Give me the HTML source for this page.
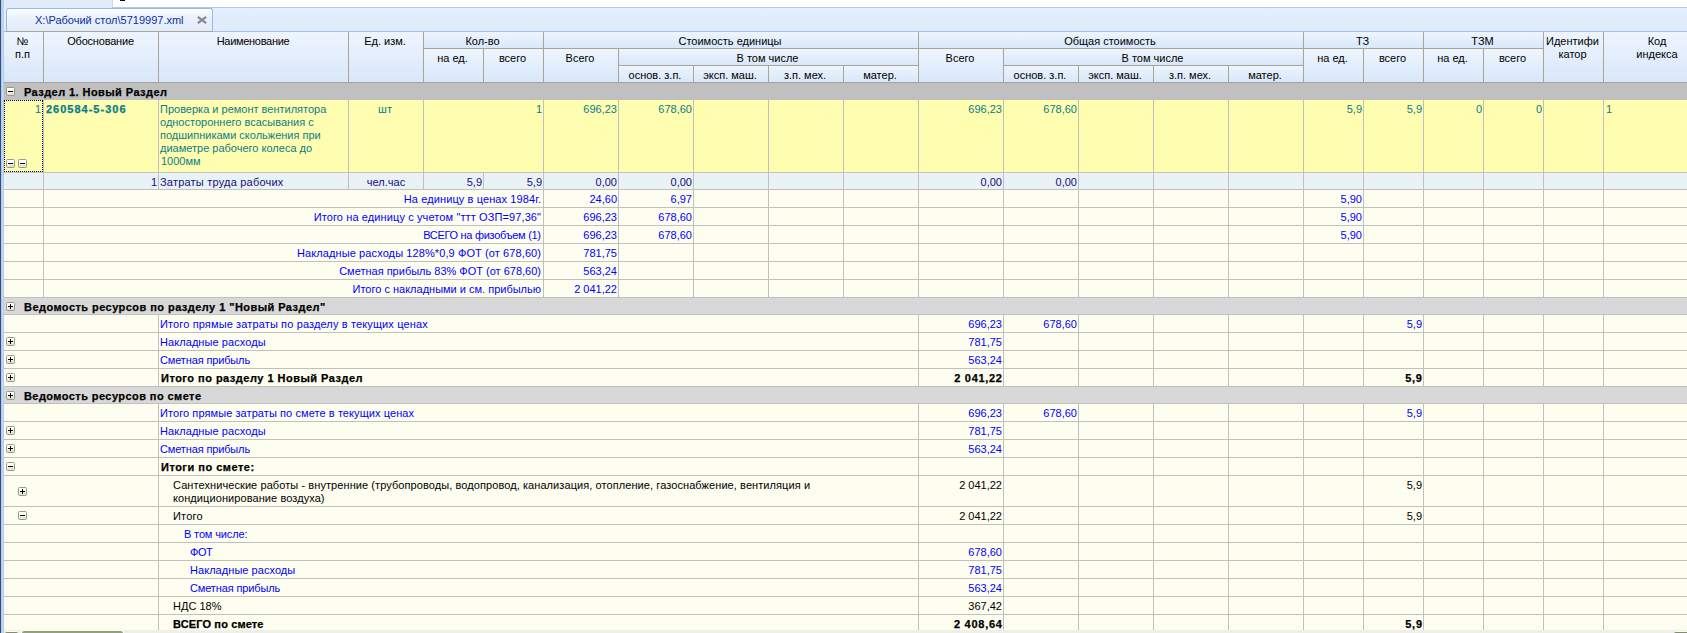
<!DOCTYPE html>
<html><head><meta charset="utf-8"><style>
html,body{margin:0;padding:0}
body{width:1687px;height:633px;position:relative;overflow:hidden;background:#fff;font-family:"Liberation Sans",sans-serif;font-size:11px;line-height:13px}
body>div{position:absolute;box-sizing:content-box}
.t{white-space:nowrap}
.c{text-align:center}
.b{font-weight:bold}
</style></head><body>
<div style="left:0px;top:0px;width:1687px;height:633px;background:#ffffff;"></div>
<div style="left:3px;top:0px;width:109px;height:8px;background:#e1ecfb;"></div>
<div style="left:112px;top:0px;width:1px;height:7px;background:#c9d9ee;"></div>
<div style="left:120px;top:0;width:5px;height:1px;background:#000"></div>
<div style="left:112px;top:7px;width:1575px;height:1px;background:#b5c9e5;"></div>
<div style="left:3px;top:8px;width:1684px;height:23px;background:linear-gradient(#e4eefc,#dfeafb)"></div>
<div style="left:3px;top:31px;width:1684px;height:1px;background:#a2c0e8;"></div>
<div style="left:4px;top:0px;width:1px;height:31px;background:#eaf2fd;"></div>
<div style="left:6px;top:8px;width:205px;height:23px;border:1px solid #99b9e4;border-bottom:none;border-radius:3px 3px 0 0;background:linear-gradient(#fbfdff,#e9f1fc 40%,#e1ebfa)"></div>
<div style="left:6px;top:31px;width:207px;height:1px;background:#a9a493;"></div>
<div class="t" style="left:35px;top:14px;color:#0c2fa0">X:\Рабочий стол\5719997.xml</div>
<svg style="position:absolute;left:196px;top:15px" width="12" height="10" viewBox="0 0 12 10"><path d="M1.9 1.9L10.1 8.1M10.1 1.9L1.9 8.1" stroke="#8a8a8a" stroke-width="2.3" stroke-linecap="butt"/></svg>
<div style="left:0px;top:0px;width:1px;height:633px;background:#30507f;"></div>
<div style="left:1px;top:0px;width:1px;height:633px;background:#b6cae2;"></div>
<div style="left:2px;top:0px;width:1px;height:633px;background:#c4d9f4;"></div>
<div style="left:3px;top:0px;width:1px;height:633px;background:#b2cdf1;"></div>
<div style="left:4px;top:32px;width:1683px;height:51px;background:#a9a493;"></div>
<div style="left:4px;top:32px;width:39px;height:50px;background:linear-gradient(#eef5fe,#d8e7fa)"></div>
<div class="t c" style="left:3px;top:35px;width:39px">№<br>п.п</div>
<div style="left:44px;top:32px;width:114px;height:50px;background:linear-gradient(#eef5fe,#d8e7fa)"></div>
<div class="t c" style="left:43px;top:35px;width:114px"><span style="letter-spacing:-0.2px;margin-left:1px">Обоснование</span></div>
<div style="left:159px;top:32px;width:189px;height:50px;background:linear-gradient(#eef5fe,#d8e7fa)"></div>
<div class="t c" style="left:158px;top:35px;width:189px"><span style="letter-spacing:-0.3px;margin-left:1px">Наименование</span></div>
<div style="left:349px;top:32px;width:74px;height:50px;background:linear-gradient(#eef5fe,#d8e7fa)"></div>
<div class="t c" style="left:348px;top:35px;width:74px">Ед. изм.</div>
<div style="left:424px;top:32px;width:119px;height:16px;background:linear-gradient(#eef5fe,#d8e7fa)"></div>
<div class="t c" style="left:423px;top:35px;width:119px">Кол-во</div>
<div style="left:424px;top:49px;width:59px;height:33px;background:linear-gradient(#eef5fe,#d8e7fa)"></div>
<div class="t c" style="left:423px;top:52px;width:59px">на ед.</div>
<div style="left:484px;top:49px;width:59px;height:33px;background:linear-gradient(#eef5fe,#d8e7fa)"></div>
<div class="t c" style="left:483px;top:52px;width:59px">всего</div>
<div style="left:544px;top:32px;width:374px;height:16px;background:linear-gradient(#eef5fe,#d8e7fa)"></div>
<div class="t c" style="left:543px;top:35px;width:374px">Стоимость единицы</div>
<div style="left:544px;top:49px;width:74px;height:33px;background:linear-gradient(#eef5fe,#d8e7fa)"></div>
<div class="t c" style="left:543px;top:52px;width:74px">Всего</div>
<div style="left:619px;top:49px;width:299px;height:16px;background:linear-gradient(#eef5fe,#d8e7fa)"></div>
<div class="t c" style="left:618px;top:52px;width:299px">В том числе</div>
<div style="left:619px;top:66px;width:74px;height:16px;background:linear-gradient(#eef5fe,#d8e7fa)"></div>
<div class="t c" style="left:618px;top:69px;width:74px">основ. з.п.</div>
<div style="left:694px;top:66px;width:74px;height:16px;background:linear-gradient(#eef5fe,#d8e7fa)"></div>
<div class="t c" style="left:693px;top:69px;width:74px">эксп. маш.</div>
<div style="left:769px;top:66px;width:74px;height:16px;background:linear-gradient(#eef5fe,#d8e7fa)"></div>
<div class="t c" style="left:768px;top:69px;width:74px">з.п. мех.</div>
<div style="left:844px;top:66px;width:74px;height:16px;background:linear-gradient(#eef5fe,#d8e7fa)"></div>
<div class="t c" style="left:843px;top:69px;width:74px">матер.</div>
<div style="left:919px;top:32px;width:384px;height:16px;background:linear-gradient(#eef5fe,#d8e7fa)"></div>
<div class="t c" style="left:918px;top:35px;width:384px">Общая стоимость</div>
<div style="left:919px;top:49px;width:84px;height:33px;background:linear-gradient(#eef5fe,#d8e7fa)"></div>
<div class="t c" style="left:918px;top:52px;width:84px">Всего</div>
<div style="left:1004px;top:49px;width:299px;height:16px;background:linear-gradient(#eef5fe,#d8e7fa)"></div>
<div class="t c" style="left:1003px;top:52px;width:299px">В том числе</div>
<div style="left:1004px;top:66px;width:74px;height:16px;background:linear-gradient(#eef5fe,#d8e7fa)"></div>
<div class="t c" style="left:1003px;top:69px;width:74px">основ. з.п.</div>
<div style="left:1079px;top:66px;width:74px;height:16px;background:linear-gradient(#eef5fe,#d8e7fa)"></div>
<div class="t c" style="left:1078px;top:69px;width:74px">эксп. маш.</div>
<div style="left:1154px;top:66px;width:74px;height:16px;background:linear-gradient(#eef5fe,#d8e7fa)"></div>
<div class="t c" style="left:1153px;top:69px;width:74px">з.п. мех.</div>
<div style="left:1229px;top:66px;width:74px;height:16px;background:linear-gradient(#eef5fe,#d8e7fa)"></div>
<div class="t c" style="left:1228px;top:69px;width:74px">матер.</div>
<div style="left:1304px;top:32px;width:119px;height:16px;background:linear-gradient(#eef5fe,#d8e7fa)"></div>
<div class="t c" style="left:1303px;top:35px;width:119px">ТЗ</div>
<div style="left:1304px;top:49px;width:59px;height:33px;background:linear-gradient(#eef5fe,#d8e7fa)"></div>
<div class="t c" style="left:1303px;top:52px;width:59px">на ед.</div>
<div style="left:1364px;top:49px;width:59px;height:33px;background:linear-gradient(#eef5fe,#d8e7fa)"></div>
<div class="t c" style="left:1363px;top:52px;width:59px">всего</div>
<div style="left:1424px;top:32px;width:119px;height:16px;background:linear-gradient(#eef5fe,#d8e7fa)"></div>
<div class="t c" style="left:1423px;top:35px;width:119px">ТЗМ</div>
<div style="left:1424px;top:49px;width:59px;height:33px;background:linear-gradient(#eef5fe,#d8e7fa)"></div>
<div class="t c" style="left:1423px;top:52px;width:59px">на ед.</div>
<div style="left:1484px;top:49px;width:59px;height:33px;background:linear-gradient(#eef5fe,#d8e7fa)"></div>
<div class="t c" style="left:1483px;top:52px;width:59px">всего</div>
<div style="left:1544px;top:32px;width:59px;height:50px;background:linear-gradient(#eef5fe,#d8e7fa)"></div>
<div class="t c" style="left:1543px;top:35px;width:59px">Идентифи<br>катор</div>
<div style="left:1604px;top:32px;width:108px;height:50px;background:linear-gradient(#eef5fe,#d8e7fa)"></div>
<div class="t c" style="left:1603px;top:35px;width:108px">Код<br>индекса</div>
<div style="left:4px;top:83px;width:1683px;height:17px;background:#c0c0c0;"></div>
<div style="left:6px;top:87px;width:7px;height:7px;border:1px solid #929e84;border-radius:1.5px;background:linear-gradient(#ffffff 30%,#e4ddd0)"><div style="position:absolute;left:1px;top:3px;width:5px;height:1px;background:#000"></div></div>
<div class="t" style="top:86px;color:#000;font-weight:bold;-webkit-text-stroke:0.25px;left:24px;letter-spacing:0.43px">Раздел 1. Новый Раздел</div>
<div style="left:4px;top:100px;width:1683px;height:72px;background:#fffdb0;"></div>
<div style="left:43px;top:100px;width:1px;height:72px;background:#c0c0c0;"></div>
<div style="left:158px;top:100px;width:1px;height:72px;background:#c0c0c0;"></div>
<div style="left:348px;top:100px;width:1px;height:72px;background:#c0c0c0;"></div>
<div style="left:423px;top:100px;width:1px;height:72px;background:#c0c0c0;"></div>
<div style="left:543px;top:100px;width:1px;height:72px;background:#c0c0c0;"></div>
<div style="left:618px;top:100px;width:1px;height:72px;background:#c0c0c0;"></div>
<div style="left:693px;top:100px;width:1px;height:72px;background:#c0c0c0;"></div>
<div style="left:768px;top:100px;width:1px;height:72px;background:#c0c0c0;"></div>
<div style="left:843px;top:100px;width:1px;height:72px;background:#c0c0c0;"></div>
<div style="left:918px;top:100px;width:1px;height:72px;background:#c0c0c0;"></div>
<div style="left:1003px;top:100px;width:1px;height:72px;background:#c0c0c0;"></div>
<div style="left:1078px;top:100px;width:1px;height:72px;background:#c0c0c0;"></div>
<div style="left:1153px;top:100px;width:1px;height:72px;background:#c0c0c0;"></div>
<div style="left:1228px;top:100px;width:1px;height:72px;background:#c0c0c0;"></div>
<div style="left:1303px;top:100px;width:1px;height:72px;background:#c0c0c0;"></div>
<div style="left:1363px;top:100px;width:1px;height:72px;background:#c0c0c0;"></div>
<div style="left:1423px;top:100px;width:1px;height:72px;background:#c0c0c0;"></div>
<div style="left:1483px;top:100px;width:1px;height:72px;background:#c0c0c0;"></div>
<div style="left:1543px;top:100px;width:1px;height:72px;background:#c0c0c0;"></div>
<div style="left:1603px;top:100px;width:1px;height:72px;background:#c0c0c0;"></div>
<div style="left:4px;top:172px;width:1683px;height:1px;background:#c0c0c0;"></div>
<div class="t" style="top:103px;color:#0a7d88;right:1646px;">1</div>
<div class="t" style="left:46px;top:103px;color:#0a7d88;font-weight:bold;-webkit-text-stroke:0.25px;letter-spacing:1px">260584-5-306</div>
<div class="t" style="left:160px;top:103px;color:#0a7d88">Проверка и ремонт вентилятора<br>одностороннего всасывания с<br>подшипниками скольжения при<br>диаметре рабочего колеса до<br><span style="margin-left:1px">1000мм</span></div>
<div class="t" style="top:103px;color:#0a7d88;left:349px;width:74px;text-align:center;margin-left:-1px">шт</div>
<div class="t" style="top:103px;color:#0a7d88;right:1145px;">1</div>
<div class="t" style="top:103px;color:#0a7d88;right:1070px;">696,23</div>
<div class="t" style="top:103px;color:#0a7d88;right:995px;">678,60</div>
<div class="t" style="top:103px;color:#0a7d88;right:685px;">696,23</div>
<div class="t" style="top:103px;color:#0a7d88;right:610px;">678,60</div>
<div class="t" style="top:103px;color:#0a7d88;right:325px;">5,9</div>
<div class="t" style="top:103px;color:#0a7d88;right:265px;">5,9</div>
<div class="t" style="top:103px;color:#0a7d88;right:205px;">0</div>
<div class="t" style="top:103px;color:#0a7d88;right:145px;">0</div>
<div class="t" style="top:103px;color:#0a7d88;left:1605px;margin-left:1px">1</div>
<div style="left:4px;top:100px;width:37px;height:70px;border:1px dotted #000033"></div>
<div style="left:6px;top:159px;width:7px;height:7px;border:1px solid #929e84;border-radius:1.5px;background:linear-gradient(#ffffff 30%,#e4ddd0)"><div style="position:absolute;left:1px;top:3px;width:5px;height:1px;background:#000"></div></div>
<div style="left:18px;top:159px;width:7px;height:7px;border:1px solid #929e84;border-radius:1.5px;background:linear-gradient(#ffffff 30%,#e4ddd0)"><div style="position:absolute;left:1px;top:3px;width:5px;height:1px;background:#000"></div></div>
<div style="left:4px;top:173px;width:1683px;height:16px;background:#e9f3f5;"></div>
<div style="left:43px;top:173px;width:1px;height:16px;background:#c0c0c0;"></div>
<div style="left:158px;top:173px;width:1px;height:16px;background:#c0c0c0;"></div>
<div style="left:348px;top:173px;width:1px;height:16px;background:#c0c0c0;"></div>
<div style="left:423px;top:173px;width:1px;height:16px;background:#c0c0c0;"></div>
<div style="left:483px;top:173px;width:1px;height:16px;background:#c0c0c0;"></div>
<div style="left:543px;top:173px;width:1px;height:16px;background:#c0c0c0;"></div>
<div style="left:618px;top:173px;width:1px;height:16px;background:#c0c0c0;"></div>
<div style="left:693px;top:173px;width:1px;height:16px;background:#c0c0c0;"></div>
<div style="left:768px;top:173px;width:1px;height:16px;background:#c0c0c0;"></div>
<div style="left:843px;top:173px;width:1px;height:16px;background:#c0c0c0;"></div>
<div style="left:918px;top:173px;width:1px;height:16px;background:#c0c0c0;"></div>
<div style="left:1003px;top:173px;width:1px;height:16px;background:#c0c0c0;"></div>
<div style="left:1078px;top:173px;width:1px;height:16px;background:#c0c0c0;"></div>
<div style="left:1153px;top:173px;width:1px;height:16px;background:#c0c0c0;"></div>
<div style="left:1228px;top:173px;width:1px;height:16px;background:#c0c0c0;"></div>
<div style="left:1303px;top:173px;width:1px;height:16px;background:#c0c0c0;"></div>
<div style="left:1363px;top:173px;width:1px;height:16px;background:#c0c0c0;"></div>
<div style="left:1423px;top:173px;width:1px;height:16px;background:#c0c0c0;"></div>
<div style="left:1483px;top:173px;width:1px;height:16px;background:#c0c0c0;"></div>
<div style="left:1543px;top:173px;width:1px;height:16px;background:#c0c0c0;"></div>
<div style="left:1603px;top:173px;width:1px;height:16px;background:#c0c0c0;"></div>
<div style="left:4px;top:189px;width:1683px;height:1px;background:#c0c0c0;"></div>
<div class="t" style="top:176px;color:#180c80;right:1530px;">1</div>
<div class="t" style="top:176px;color:#180c80;left:160px;letter-spacing:0.21px">Затраты труда рабочих</div>
<div class="t" style="top:176px;color:#180c80;left:349px;width:74px;text-align:center;">чел.час</div>
<div class="t" style="top:176px;color:#180c80;right:1205px;">5,9</div>
<div class="t" style="top:176px;color:#180c80;right:1145px;">5,9</div>
<div class="t" style="top:176px;color:#180c80;right:1070px;">0,00</div>
<div class="t" style="top:176px;color:#180c80;right:995px;">0,00</div>
<div class="t" style="top:176px;color:#180c80;right:685px;">0,00</div>
<div class="t" style="top:176px;color:#180c80;right:610px;">0,00</div>
<div style="left:4px;top:190px;width:1683px;height:17px;background:#fdfdf0;"></div>
<div style="left:43px;top:190px;width:1px;height:17px;background:#c0c0c0;"></div>
<div style="left:543px;top:190px;width:1px;height:17px;background:#c0c0c0;"></div>
<div style="left:618px;top:190px;width:1px;height:17px;background:#c0c0c0;"></div>
<div style="left:693px;top:190px;width:1px;height:17px;background:#c0c0c0;"></div>
<div style="left:768px;top:190px;width:1px;height:17px;background:#c0c0c0;"></div>
<div style="left:843px;top:190px;width:1px;height:17px;background:#c0c0c0;"></div>
<div style="left:918px;top:190px;width:1px;height:17px;background:#c0c0c0;"></div>
<div style="left:1003px;top:190px;width:1px;height:17px;background:#c0c0c0;"></div>
<div style="left:1078px;top:190px;width:1px;height:17px;background:#c0c0c0;"></div>
<div style="left:1153px;top:190px;width:1px;height:17px;background:#c0c0c0;"></div>
<div style="left:1228px;top:190px;width:1px;height:17px;background:#c0c0c0;"></div>
<div style="left:1303px;top:190px;width:1px;height:17px;background:#c0c0c0;"></div>
<div style="left:1363px;top:190px;width:1px;height:17px;background:#c0c0c0;"></div>
<div style="left:1423px;top:190px;width:1px;height:17px;background:#c0c0c0;"></div>
<div style="left:1483px;top:190px;width:1px;height:17px;background:#c0c0c0;"></div>
<div style="left:1543px;top:190px;width:1px;height:17px;background:#c0c0c0;"></div>
<div style="left:1603px;top:190px;width:1px;height:17px;background:#c0c0c0;"></div>
<div style="left:4px;top:207px;width:1683px;height:1px;background:#c0c0c0;"></div>
<div class="t" style="top:193px;right:1146px;color:#0000ff;letter-spacing:0.1px;margin-right:-0.1px">На единицу в ценах 1984г.</div>
<div class="t" style="top:193px;color:#0000ff;right:1070px;">24,60</div>
<div class="t" style="top:193px;color:#0000ff;right:995px;">6,97</div>
<div class="t" style="top:193px;color:#0000ff;right:325px;">5,90</div>
<div style="left:4px;top:208px;width:1683px;height:17px;background:#fdfdf0;"></div>
<div style="left:43px;top:208px;width:1px;height:17px;background:#c0c0c0;"></div>
<div style="left:543px;top:208px;width:1px;height:17px;background:#c0c0c0;"></div>
<div style="left:618px;top:208px;width:1px;height:17px;background:#c0c0c0;"></div>
<div style="left:693px;top:208px;width:1px;height:17px;background:#c0c0c0;"></div>
<div style="left:768px;top:208px;width:1px;height:17px;background:#c0c0c0;"></div>
<div style="left:843px;top:208px;width:1px;height:17px;background:#c0c0c0;"></div>
<div style="left:918px;top:208px;width:1px;height:17px;background:#c0c0c0;"></div>
<div style="left:1003px;top:208px;width:1px;height:17px;background:#c0c0c0;"></div>
<div style="left:1078px;top:208px;width:1px;height:17px;background:#c0c0c0;"></div>
<div style="left:1153px;top:208px;width:1px;height:17px;background:#c0c0c0;"></div>
<div style="left:1228px;top:208px;width:1px;height:17px;background:#c0c0c0;"></div>
<div style="left:1303px;top:208px;width:1px;height:17px;background:#c0c0c0;"></div>
<div style="left:1363px;top:208px;width:1px;height:17px;background:#c0c0c0;"></div>
<div style="left:1423px;top:208px;width:1px;height:17px;background:#c0c0c0;"></div>
<div style="left:1483px;top:208px;width:1px;height:17px;background:#c0c0c0;"></div>
<div style="left:1543px;top:208px;width:1px;height:17px;background:#c0c0c0;"></div>
<div style="left:1603px;top:208px;width:1px;height:17px;background:#c0c0c0;"></div>
<div style="left:4px;top:225px;width:1683px;height:1px;background:#c0c0c0;"></div>
<div class="t" style="top:211px;right:1146px;color:#0000ff;letter-spacing:0.11px;margin-right:-0.11px">Итого на единицу с учетом "ттт ОЗП=97,36"</div>
<div class="t" style="top:211px;color:#0000ff;right:1070px;">696,23</div>
<div class="t" style="top:211px;color:#0000ff;right:995px;">678,60</div>
<div class="t" style="top:211px;color:#0000ff;right:325px;">5,90</div>
<div style="left:4px;top:226px;width:1683px;height:17px;background:#fdfdf0;"></div>
<div style="left:43px;top:226px;width:1px;height:17px;background:#c0c0c0;"></div>
<div style="left:543px;top:226px;width:1px;height:17px;background:#c0c0c0;"></div>
<div style="left:618px;top:226px;width:1px;height:17px;background:#c0c0c0;"></div>
<div style="left:693px;top:226px;width:1px;height:17px;background:#c0c0c0;"></div>
<div style="left:768px;top:226px;width:1px;height:17px;background:#c0c0c0;"></div>
<div style="left:843px;top:226px;width:1px;height:17px;background:#c0c0c0;"></div>
<div style="left:918px;top:226px;width:1px;height:17px;background:#c0c0c0;"></div>
<div style="left:1003px;top:226px;width:1px;height:17px;background:#c0c0c0;"></div>
<div style="left:1078px;top:226px;width:1px;height:17px;background:#c0c0c0;"></div>
<div style="left:1153px;top:226px;width:1px;height:17px;background:#c0c0c0;"></div>
<div style="left:1228px;top:226px;width:1px;height:17px;background:#c0c0c0;"></div>
<div style="left:1303px;top:226px;width:1px;height:17px;background:#c0c0c0;"></div>
<div style="left:1363px;top:226px;width:1px;height:17px;background:#c0c0c0;"></div>
<div style="left:1423px;top:226px;width:1px;height:17px;background:#c0c0c0;"></div>
<div style="left:1483px;top:226px;width:1px;height:17px;background:#c0c0c0;"></div>
<div style="left:1543px;top:226px;width:1px;height:17px;background:#c0c0c0;"></div>
<div style="left:1603px;top:226px;width:1px;height:17px;background:#c0c0c0;"></div>
<div style="left:4px;top:243px;width:1683px;height:1px;background:#c0c0c0;"></div>
<div class="t" style="top:229px;right:1146px;color:#0000ff;letter-spacing:-0.29px;margin-right:0.29px">ВСЕГО на физобъем (1)</div>
<div class="t" style="top:229px;color:#0000ff;right:1070px;">696,23</div>
<div class="t" style="top:229px;color:#0000ff;right:995px;">678,60</div>
<div class="t" style="top:229px;color:#0000ff;right:325px;">5,90</div>
<div style="left:4px;top:244px;width:1683px;height:17px;background:#fdfdf0;"></div>
<div style="left:43px;top:244px;width:1px;height:17px;background:#c0c0c0;"></div>
<div style="left:543px;top:244px;width:1px;height:17px;background:#c0c0c0;"></div>
<div style="left:618px;top:244px;width:1px;height:17px;background:#c0c0c0;"></div>
<div style="left:693px;top:244px;width:1px;height:17px;background:#c0c0c0;"></div>
<div style="left:768px;top:244px;width:1px;height:17px;background:#c0c0c0;"></div>
<div style="left:843px;top:244px;width:1px;height:17px;background:#c0c0c0;"></div>
<div style="left:918px;top:244px;width:1px;height:17px;background:#c0c0c0;"></div>
<div style="left:1003px;top:244px;width:1px;height:17px;background:#c0c0c0;"></div>
<div style="left:1078px;top:244px;width:1px;height:17px;background:#c0c0c0;"></div>
<div style="left:1153px;top:244px;width:1px;height:17px;background:#c0c0c0;"></div>
<div style="left:1228px;top:244px;width:1px;height:17px;background:#c0c0c0;"></div>
<div style="left:1303px;top:244px;width:1px;height:17px;background:#c0c0c0;"></div>
<div style="left:1363px;top:244px;width:1px;height:17px;background:#c0c0c0;"></div>
<div style="left:1423px;top:244px;width:1px;height:17px;background:#c0c0c0;"></div>
<div style="left:1483px;top:244px;width:1px;height:17px;background:#c0c0c0;"></div>
<div style="left:1543px;top:244px;width:1px;height:17px;background:#c0c0c0;"></div>
<div style="left:1603px;top:244px;width:1px;height:17px;background:#c0c0c0;"></div>
<div style="left:4px;top:261px;width:1683px;height:1px;background:#c0c0c0;"></div>
<div class="t" style="top:247px;right:1146px;color:#0000ff;letter-spacing:0.1px;margin-right:-0.1px">Накладные расходы 128%*0,9 ФОТ (от 678,60)</div>
<div class="t" style="top:247px;color:#0000ff;right:1070px;">781,75</div>
<div style="left:4px;top:262px;width:1683px;height:17px;background:#fdfdf0;"></div>
<div style="left:43px;top:262px;width:1px;height:17px;background:#c0c0c0;"></div>
<div style="left:543px;top:262px;width:1px;height:17px;background:#c0c0c0;"></div>
<div style="left:618px;top:262px;width:1px;height:17px;background:#c0c0c0;"></div>
<div style="left:693px;top:262px;width:1px;height:17px;background:#c0c0c0;"></div>
<div style="left:768px;top:262px;width:1px;height:17px;background:#c0c0c0;"></div>
<div style="left:843px;top:262px;width:1px;height:17px;background:#c0c0c0;"></div>
<div style="left:918px;top:262px;width:1px;height:17px;background:#c0c0c0;"></div>
<div style="left:1003px;top:262px;width:1px;height:17px;background:#c0c0c0;"></div>
<div style="left:1078px;top:262px;width:1px;height:17px;background:#c0c0c0;"></div>
<div style="left:1153px;top:262px;width:1px;height:17px;background:#c0c0c0;"></div>
<div style="left:1228px;top:262px;width:1px;height:17px;background:#c0c0c0;"></div>
<div style="left:1303px;top:262px;width:1px;height:17px;background:#c0c0c0;"></div>
<div style="left:1363px;top:262px;width:1px;height:17px;background:#c0c0c0;"></div>
<div style="left:1423px;top:262px;width:1px;height:17px;background:#c0c0c0;"></div>
<div style="left:1483px;top:262px;width:1px;height:17px;background:#c0c0c0;"></div>
<div style="left:1543px;top:262px;width:1px;height:17px;background:#c0c0c0;"></div>
<div style="left:1603px;top:262px;width:1px;height:17px;background:#c0c0c0;"></div>
<div style="left:4px;top:279px;width:1683px;height:1px;background:#c0c0c0;"></div>
<div class="t" style="top:265px;right:1146px;color:#0000ff;letter-spacing:0px;margin-right:0px">Сметная прибыль 83% ФОТ (от 678,60)</div>
<div class="t" style="top:265px;color:#0000ff;right:1070px;">563,24</div>
<div style="left:4px;top:280px;width:1683px;height:17px;background:#fdfdf0;"></div>
<div style="left:43px;top:280px;width:1px;height:17px;background:#c0c0c0;"></div>
<div style="left:543px;top:280px;width:1px;height:17px;background:#c0c0c0;"></div>
<div style="left:618px;top:280px;width:1px;height:17px;background:#c0c0c0;"></div>
<div style="left:693px;top:280px;width:1px;height:17px;background:#c0c0c0;"></div>
<div style="left:768px;top:280px;width:1px;height:17px;background:#c0c0c0;"></div>
<div style="left:843px;top:280px;width:1px;height:17px;background:#c0c0c0;"></div>
<div style="left:918px;top:280px;width:1px;height:17px;background:#c0c0c0;"></div>
<div style="left:1003px;top:280px;width:1px;height:17px;background:#c0c0c0;"></div>
<div style="left:1078px;top:280px;width:1px;height:17px;background:#c0c0c0;"></div>
<div style="left:1153px;top:280px;width:1px;height:17px;background:#c0c0c0;"></div>
<div style="left:1228px;top:280px;width:1px;height:17px;background:#c0c0c0;"></div>
<div style="left:1303px;top:280px;width:1px;height:17px;background:#c0c0c0;"></div>
<div style="left:1363px;top:280px;width:1px;height:17px;background:#c0c0c0;"></div>
<div style="left:1423px;top:280px;width:1px;height:17px;background:#c0c0c0;"></div>
<div style="left:1483px;top:280px;width:1px;height:17px;background:#c0c0c0;"></div>
<div style="left:1543px;top:280px;width:1px;height:17px;background:#c0c0c0;"></div>
<div style="left:1603px;top:280px;width:1px;height:17px;background:#c0c0c0;"></div>
<div style="left:4px;top:297px;width:1683px;height:1px;background:#c0c0c0;"></div>
<div class="t" style="top:283px;right:1146px;color:#0000ff;letter-spacing:0px;margin-right:0px">Итого с накладными и см. прибылью</div>
<div class="t" style="top:283px;color:#0000ff;right:1070px;">2 041,22</div>
<div style="left:4px;top:298px;width:1683px;height:16px;background:#d8d8d8;"></div>
<div style="left:4px;top:314px;width:1683px;height:1px;background:#c0c0c0;"></div>
<div style="left:6px;top:302px;width:7px;height:7px;border:1px solid #929e84;border-radius:1.5px;background:linear-gradient(#ffffff 30%,#e4ddd0)"><div style="position:absolute;left:1px;top:3px;width:5px;height:1px;background:#000"></div><div style="position:absolute;left:3px;top:1px;width:1px;height:5px;background:#000"></div></div>
<div class="t" style="top:301px;color:#000;font-weight:bold;-webkit-text-stroke:0.25px;left:24px;letter-spacing:0.45px">Ведомость ресурсов по разделу 1 "Новый Раздел"</div>
<div style="left:4px;top:315px;width:1683px;height:17px;background:#fdfdf0;"></div>
<div style="left:158px;top:315px;width:1px;height:17px;background:#c0c0c0;"></div>
<div style="left:918px;top:315px;width:1px;height:17px;background:#c0c0c0;"></div>
<div style="left:1003px;top:315px;width:1px;height:17px;background:#c0c0c0;"></div>
<div style="left:1078px;top:315px;width:1px;height:17px;background:#c0c0c0;"></div>
<div style="left:1153px;top:315px;width:1px;height:17px;background:#c0c0c0;"></div>
<div style="left:1228px;top:315px;width:1px;height:17px;background:#c0c0c0;"></div>
<div style="left:1303px;top:315px;width:1px;height:17px;background:#c0c0c0;"></div>
<div style="left:1363px;top:315px;width:1px;height:17px;background:#c0c0c0;"></div>
<div style="left:1423px;top:315px;width:1px;height:17px;background:#c0c0c0;"></div>
<div style="left:1483px;top:315px;width:1px;height:17px;background:#c0c0c0;"></div>
<div style="left:1543px;top:315px;width:1px;height:17px;background:#c0c0c0;"></div>
<div style="left:1603px;top:315px;width:1px;height:17px;background:#c0c0c0;"></div>
<div style="left:4px;top:332px;width:1683px;height:1px;background:#c0c0c0;"></div>
<div class="t" style="left:160px;top:318px;color:#0000ff;letter-spacing:0.13px;">Итого прямые затраты по разделу в текущих ценах</div>
<div class="t" style="top:318px;color:#0000ff;right:685px;">696,23</div>
<div class="t" style="top:318px;color:#0000ff;right:610px;">678,60</div>
<div class="t" style="top:318px;color:#0000ff;right:265px;">5,9</div>
<div style="left:4px;top:333px;width:1683px;height:17px;background:#fdfdf0;"></div>
<div style="left:158px;top:333px;width:1px;height:17px;background:#c0c0c0;"></div>
<div style="left:918px;top:333px;width:1px;height:17px;background:#c0c0c0;"></div>
<div style="left:1003px;top:333px;width:1px;height:17px;background:#c0c0c0;"></div>
<div style="left:1078px;top:333px;width:1px;height:17px;background:#c0c0c0;"></div>
<div style="left:1153px;top:333px;width:1px;height:17px;background:#c0c0c0;"></div>
<div style="left:1228px;top:333px;width:1px;height:17px;background:#c0c0c0;"></div>
<div style="left:1303px;top:333px;width:1px;height:17px;background:#c0c0c0;"></div>
<div style="left:1363px;top:333px;width:1px;height:17px;background:#c0c0c0;"></div>
<div style="left:1423px;top:333px;width:1px;height:17px;background:#c0c0c0;"></div>
<div style="left:1483px;top:333px;width:1px;height:17px;background:#c0c0c0;"></div>
<div style="left:1543px;top:333px;width:1px;height:17px;background:#c0c0c0;"></div>
<div style="left:1603px;top:333px;width:1px;height:17px;background:#c0c0c0;"></div>
<div style="left:4px;top:350px;width:1683px;height:1px;background:#c0c0c0;"></div>
<div style="left:6px;top:337px;width:7px;height:7px;border:1px solid #929e84;border-radius:1.5px;background:linear-gradient(#ffffff 30%,#e4ddd0)"><div style="position:absolute;left:1px;top:3px;width:5px;height:1px;background:#000"></div><div style="position:absolute;left:3px;top:1px;width:1px;height:5px;background:#000"></div></div>
<div class="t" style="left:160px;top:336px;color:#0000ff;letter-spacing:0.07px;">Накладные расходы</div>
<div class="t" style="top:336px;color:#0000ff;right:685px;">781,75</div>
<div style="left:4px;top:351px;width:1683px;height:17px;background:#fdfdf0;"></div>
<div style="left:158px;top:351px;width:1px;height:17px;background:#c0c0c0;"></div>
<div style="left:918px;top:351px;width:1px;height:17px;background:#c0c0c0;"></div>
<div style="left:1003px;top:351px;width:1px;height:17px;background:#c0c0c0;"></div>
<div style="left:1078px;top:351px;width:1px;height:17px;background:#c0c0c0;"></div>
<div style="left:1153px;top:351px;width:1px;height:17px;background:#c0c0c0;"></div>
<div style="left:1228px;top:351px;width:1px;height:17px;background:#c0c0c0;"></div>
<div style="left:1303px;top:351px;width:1px;height:17px;background:#c0c0c0;"></div>
<div style="left:1363px;top:351px;width:1px;height:17px;background:#c0c0c0;"></div>
<div style="left:1423px;top:351px;width:1px;height:17px;background:#c0c0c0;"></div>
<div style="left:1483px;top:351px;width:1px;height:17px;background:#c0c0c0;"></div>
<div style="left:1543px;top:351px;width:1px;height:17px;background:#c0c0c0;"></div>
<div style="left:1603px;top:351px;width:1px;height:17px;background:#c0c0c0;"></div>
<div style="left:4px;top:368px;width:1683px;height:1px;background:#c0c0c0;"></div>
<div style="left:6px;top:355px;width:7px;height:7px;border:1px solid #929e84;border-radius:1.5px;background:linear-gradient(#ffffff 30%,#e4ddd0)"><div style="position:absolute;left:1px;top:3px;width:5px;height:1px;background:#000"></div><div style="position:absolute;left:3px;top:1px;width:1px;height:5px;background:#000"></div></div>
<div class="t" style="left:160px;top:354px;color:#0000ff;letter-spacing:-0.14px;">Сметная прибыль</div>
<div class="t" style="top:354px;color:#0000ff;right:685px;">563,24</div>
<div style="left:4px;top:369px;width:1683px;height:17px;background:#fdfdf0;"></div>
<div style="left:158px;top:369px;width:1px;height:17px;background:#c0c0c0;"></div>
<div style="left:918px;top:369px;width:1px;height:17px;background:#c0c0c0;"></div>
<div style="left:1003px;top:369px;width:1px;height:17px;background:#c0c0c0;"></div>
<div style="left:1078px;top:369px;width:1px;height:17px;background:#c0c0c0;"></div>
<div style="left:1153px;top:369px;width:1px;height:17px;background:#c0c0c0;"></div>
<div style="left:1228px;top:369px;width:1px;height:17px;background:#c0c0c0;"></div>
<div style="left:1303px;top:369px;width:1px;height:17px;background:#c0c0c0;"></div>
<div style="left:1363px;top:369px;width:1px;height:17px;background:#c0c0c0;"></div>
<div style="left:1423px;top:369px;width:1px;height:17px;background:#c0c0c0;"></div>
<div style="left:1483px;top:369px;width:1px;height:17px;background:#c0c0c0;"></div>
<div style="left:1543px;top:369px;width:1px;height:17px;background:#c0c0c0;"></div>
<div style="left:1603px;top:369px;width:1px;height:17px;background:#c0c0c0;"></div>
<div style="left:4px;top:386px;width:1683px;height:1px;background:#c0c0c0;"></div>
<div style="left:6px;top:373px;width:7px;height:7px;border:1px solid #929e84;border-radius:1.5px;background:linear-gradient(#ffffff 30%,#e4ddd0)"><div style="position:absolute;left:1px;top:3px;width:5px;height:1px;background:#000"></div><div style="position:absolute;left:3px;top:1px;width:1px;height:5px;background:#000"></div></div>
<div class="t" style="left:161px;top:372px;color:#000;letter-spacing:0.49px;font-weight:bold;-webkit-text-stroke:0.25px;">Итого по разделу 1 Новый Раздел</div>
<div class="t" style="top:372px;color:#000;font-weight:bold;-webkit-text-stroke:0.25px;right:685px;letter-spacing:0.7px;margin-right:-0.7px">2 041,22</div>
<div class="t" style="top:372px;color:#000;font-weight:bold;-webkit-text-stroke:0.25px;right:265px;letter-spacing:0.7px;margin-right:-0.7px">5,9</div>
<div style="left:4px;top:387px;width:1683px;height:16px;background:#d8d8d8;"></div>
<div style="left:4px;top:403px;width:1683px;height:1px;background:#c0c0c0;"></div>
<div style="left:6px;top:391px;width:7px;height:7px;border:1px solid #929e84;border-radius:1.5px;background:linear-gradient(#ffffff 30%,#e4ddd0)"><div style="position:absolute;left:1px;top:3px;width:5px;height:1px;background:#000"></div><div style="position:absolute;left:3px;top:1px;width:1px;height:5px;background:#000"></div></div>
<div class="t" style="top:390px;color:#000;font-weight:bold;-webkit-text-stroke:0.25px;left:24px;letter-spacing:0.43px">Ведомость ресурсов по смете</div>
<div style="left:4px;top:404px;width:1683px;height:17px;background:#fdfdf0;"></div>
<div style="left:158px;top:404px;width:1px;height:17px;background:#c0c0c0;"></div>
<div style="left:918px;top:404px;width:1px;height:17px;background:#c0c0c0;"></div>
<div style="left:1003px;top:404px;width:1px;height:17px;background:#c0c0c0;"></div>
<div style="left:1078px;top:404px;width:1px;height:17px;background:#c0c0c0;"></div>
<div style="left:1153px;top:404px;width:1px;height:17px;background:#c0c0c0;"></div>
<div style="left:1228px;top:404px;width:1px;height:17px;background:#c0c0c0;"></div>
<div style="left:1303px;top:404px;width:1px;height:17px;background:#c0c0c0;"></div>
<div style="left:1363px;top:404px;width:1px;height:17px;background:#c0c0c0;"></div>
<div style="left:1423px;top:404px;width:1px;height:17px;background:#c0c0c0;"></div>
<div style="left:1483px;top:404px;width:1px;height:17px;background:#c0c0c0;"></div>
<div style="left:1543px;top:404px;width:1px;height:17px;background:#c0c0c0;"></div>
<div style="left:1603px;top:404px;width:1px;height:17px;background:#c0c0c0;"></div>
<div style="left:4px;top:421px;width:1683px;height:1px;background:#c0c0c0;"></div>
<div class="t" style="left:160px;top:407px;color:#0000ff;letter-spacing:0.08px;">Итого прямые затраты по смете в текущих ценах</div>
<div class="t" style="top:407px;color:#0000ff;right:685px;">696,23</div>
<div class="t" style="top:407px;color:#0000ff;right:610px;">678,60</div>
<div class="t" style="top:407px;color:#0000ff;right:265px;">5,9</div>
<div style="left:4px;top:422px;width:1683px;height:17px;background:#fdfdf0;"></div>
<div style="left:158px;top:422px;width:1px;height:17px;background:#c0c0c0;"></div>
<div style="left:918px;top:422px;width:1px;height:17px;background:#c0c0c0;"></div>
<div style="left:1003px;top:422px;width:1px;height:17px;background:#c0c0c0;"></div>
<div style="left:1078px;top:422px;width:1px;height:17px;background:#c0c0c0;"></div>
<div style="left:1153px;top:422px;width:1px;height:17px;background:#c0c0c0;"></div>
<div style="left:1228px;top:422px;width:1px;height:17px;background:#c0c0c0;"></div>
<div style="left:1303px;top:422px;width:1px;height:17px;background:#c0c0c0;"></div>
<div style="left:1363px;top:422px;width:1px;height:17px;background:#c0c0c0;"></div>
<div style="left:1423px;top:422px;width:1px;height:17px;background:#c0c0c0;"></div>
<div style="left:1483px;top:422px;width:1px;height:17px;background:#c0c0c0;"></div>
<div style="left:1543px;top:422px;width:1px;height:17px;background:#c0c0c0;"></div>
<div style="left:1603px;top:422px;width:1px;height:17px;background:#c0c0c0;"></div>
<div style="left:4px;top:439px;width:1683px;height:1px;background:#c0c0c0;"></div>
<div style="left:6px;top:426px;width:7px;height:7px;border:1px solid #929e84;border-radius:1.5px;background:linear-gradient(#ffffff 30%,#e4ddd0)"><div style="position:absolute;left:1px;top:3px;width:5px;height:1px;background:#000"></div><div style="position:absolute;left:3px;top:1px;width:1px;height:5px;background:#000"></div></div>
<div class="t" style="left:160px;top:425px;color:#0000ff;letter-spacing:0.07px;">Накладные расходы</div>
<div class="t" style="top:425px;color:#0000ff;right:685px;">781,75</div>
<div style="left:4px;top:440px;width:1683px;height:17px;background:#fdfdf0;"></div>
<div style="left:158px;top:440px;width:1px;height:17px;background:#c0c0c0;"></div>
<div style="left:918px;top:440px;width:1px;height:17px;background:#c0c0c0;"></div>
<div style="left:1003px;top:440px;width:1px;height:17px;background:#c0c0c0;"></div>
<div style="left:1078px;top:440px;width:1px;height:17px;background:#c0c0c0;"></div>
<div style="left:1153px;top:440px;width:1px;height:17px;background:#c0c0c0;"></div>
<div style="left:1228px;top:440px;width:1px;height:17px;background:#c0c0c0;"></div>
<div style="left:1303px;top:440px;width:1px;height:17px;background:#c0c0c0;"></div>
<div style="left:1363px;top:440px;width:1px;height:17px;background:#c0c0c0;"></div>
<div style="left:1423px;top:440px;width:1px;height:17px;background:#c0c0c0;"></div>
<div style="left:1483px;top:440px;width:1px;height:17px;background:#c0c0c0;"></div>
<div style="left:1543px;top:440px;width:1px;height:17px;background:#c0c0c0;"></div>
<div style="left:1603px;top:440px;width:1px;height:17px;background:#c0c0c0;"></div>
<div style="left:4px;top:457px;width:1683px;height:1px;background:#c0c0c0;"></div>
<div style="left:6px;top:444px;width:7px;height:7px;border:1px solid #929e84;border-radius:1.5px;background:linear-gradient(#ffffff 30%,#e4ddd0)"><div style="position:absolute;left:1px;top:3px;width:5px;height:1px;background:#000"></div><div style="position:absolute;left:3px;top:1px;width:1px;height:5px;background:#000"></div></div>
<div class="t" style="left:160px;top:443px;color:#0000ff;letter-spacing:-0.14px;">Сметная прибыль</div>
<div class="t" style="top:443px;color:#0000ff;right:685px;">563,24</div>
<div style="left:4px;top:458px;width:1683px;height:17px;background:#fdfdf0;"></div>
<div style="left:158px;top:458px;width:1px;height:17px;background:#c0c0c0;"></div>
<div style="left:918px;top:458px;width:1px;height:17px;background:#c0c0c0;"></div>
<div style="left:1003px;top:458px;width:1px;height:17px;background:#c0c0c0;"></div>
<div style="left:1078px;top:458px;width:1px;height:17px;background:#c0c0c0;"></div>
<div style="left:1153px;top:458px;width:1px;height:17px;background:#c0c0c0;"></div>
<div style="left:1228px;top:458px;width:1px;height:17px;background:#c0c0c0;"></div>
<div style="left:1303px;top:458px;width:1px;height:17px;background:#c0c0c0;"></div>
<div style="left:1363px;top:458px;width:1px;height:17px;background:#c0c0c0;"></div>
<div style="left:1423px;top:458px;width:1px;height:17px;background:#c0c0c0;"></div>
<div style="left:1483px;top:458px;width:1px;height:17px;background:#c0c0c0;"></div>
<div style="left:1543px;top:458px;width:1px;height:17px;background:#c0c0c0;"></div>
<div style="left:1603px;top:458px;width:1px;height:17px;background:#c0c0c0;"></div>
<div style="left:4px;top:475px;width:1683px;height:1px;background:#c0c0c0;"></div>
<div style="left:6px;top:462px;width:7px;height:7px;border:1px solid #929e84;border-radius:1.5px;background:linear-gradient(#ffffff 30%,#e4ddd0)"><div style="position:absolute;left:1px;top:3px;width:5px;height:1px;background:#000"></div></div>
<div class="t" style="left:161px;top:461px;color:#000;letter-spacing:0.5px;font-weight:bold;-webkit-text-stroke:0.25px;">Итоги по смете:</div>
<div style="left:4px;top:476px;width:1683px;height:30px;background:#fdfdf0;"></div>
<div style="left:158px;top:476px;width:1px;height:30px;background:#c0c0c0;"></div>
<div style="left:918px;top:476px;width:1px;height:30px;background:#c0c0c0;"></div>
<div style="left:1003px;top:476px;width:1px;height:30px;background:#c0c0c0;"></div>
<div style="left:1078px;top:476px;width:1px;height:30px;background:#c0c0c0;"></div>
<div style="left:1153px;top:476px;width:1px;height:30px;background:#c0c0c0;"></div>
<div style="left:1228px;top:476px;width:1px;height:30px;background:#c0c0c0;"></div>
<div style="left:1303px;top:476px;width:1px;height:30px;background:#c0c0c0;"></div>
<div style="left:1363px;top:476px;width:1px;height:30px;background:#c0c0c0;"></div>
<div style="left:1423px;top:476px;width:1px;height:30px;background:#c0c0c0;"></div>
<div style="left:1483px;top:476px;width:1px;height:30px;background:#c0c0c0;"></div>
<div style="left:1543px;top:476px;width:1px;height:30px;background:#c0c0c0;"></div>
<div style="left:1603px;top:476px;width:1px;height:30px;background:#c0c0c0;"></div>
<div style="left:4px;top:506px;width:1683px;height:1px;background:#c0c0c0;"></div>
<div style="left:18px;top:487px;width:7px;height:7px;border:1px solid #929e84;border-radius:1.5px;background:linear-gradient(#ffffff 30%,#e4ddd0)"><div style="position:absolute;left:1px;top:3px;width:5px;height:1px;background:#000"></div><div style="position:absolute;left:3px;top:1px;width:1px;height:5px;background:#000"></div></div>
<div class="t" style="left:173px;top:479px;color:#000;letter-spacing:0.08px;">Сантехнические работы - внутренние (трубопроводы, водопровод, канализация, отопление, газоснабжение, вентиляция и<br>кондиционирование воздуха)</div>
<div class="t" style="top:479px;color:#000;right:685px;">2 041,22</div>
<div class="t" style="top:479px;color:#000;right:265px;">5,9</div>
<div style="left:4px;top:507px;width:1683px;height:17px;background:#fdfdf0;"></div>
<div style="left:158px;top:507px;width:1px;height:17px;background:#c0c0c0;"></div>
<div style="left:918px;top:507px;width:1px;height:17px;background:#c0c0c0;"></div>
<div style="left:1003px;top:507px;width:1px;height:17px;background:#c0c0c0;"></div>
<div style="left:1078px;top:507px;width:1px;height:17px;background:#c0c0c0;"></div>
<div style="left:1153px;top:507px;width:1px;height:17px;background:#c0c0c0;"></div>
<div style="left:1228px;top:507px;width:1px;height:17px;background:#c0c0c0;"></div>
<div style="left:1303px;top:507px;width:1px;height:17px;background:#c0c0c0;"></div>
<div style="left:1363px;top:507px;width:1px;height:17px;background:#c0c0c0;"></div>
<div style="left:1423px;top:507px;width:1px;height:17px;background:#c0c0c0;"></div>
<div style="left:1483px;top:507px;width:1px;height:17px;background:#c0c0c0;"></div>
<div style="left:1543px;top:507px;width:1px;height:17px;background:#c0c0c0;"></div>
<div style="left:1603px;top:507px;width:1px;height:17px;background:#c0c0c0;"></div>
<div style="left:4px;top:524px;width:1683px;height:1px;background:#c0c0c0;"></div>
<div style="left:18px;top:511px;width:7px;height:7px;border:1px solid #929e84;border-radius:1.5px;background:linear-gradient(#ffffff 30%,#e4ddd0)"><div style="position:absolute;left:1px;top:3px;width:5px;height:1px;background:#000"></div></div>
<div class="t" style="left:173px;top:510px;color:#000;letter-spacing:0.2px;">Итого</div>
<div class="t" style="top:510px;color:#000;right:685px;">2 041,22</div>
<div class="t" style="top:510px;color:#000;right:265px;">5,9</div>
<div style="left:4px;top:525px;width:1683px;height:17px;background:#fdfdf0;"></div>
<div style="left:158px;top:525px;width:1px;height:17px;background:#c0c0c0;"></div>
<div style="left:918px;top:525px;width:1px;height:17px;background:#c0c0c0;"></div>
<div style="left:1003px;top:525px;width:1px;height:17px;background:#c0c0c0;"></div>
<div style="left:1078px;top:525px;width:1px;height:17px;background:#c0c0c0;"></div>
<div style="left:1153px;top:525px;width:1px;height:17px;background:#c0c0c0;"></div>
<div style="left:1228px;top:525px;width:1px;height:17px;background:#c0c0c0;"></div>
<div style="left:1303px;top:525px;width:1px;height:17px;background:#c0c0c0;"></div>
<div style="left:1363px;top:525px;width:1px;height:17px;background:#c0c0c0;"></div>
<div style="left:1423px;top:525px;width:1px;height:17px;background:#c0c0c0;"></div>
<div style="left:1483px;top:525px;width:1px;height:17px;background:#c0c0c0;"></div>
<div style="left:1543px;top:525px;width:1px;height:17px;background:#c0c0c0;"></div>
<div style="left:1603px;top:525px;width:1px;height:17px;background:#c0c0c0;"></div>
<div style="left:4px;top:542px;width:1683px;height:1px;background:#c0c0c0;"></div>
<div class="t" style="left:184px;top:528px;color:#0000ff;letter-spacing:-0.14px;">В том числе:</div>
<div style="left:4px;top:543px;width:1683px;height:17px;background:#fdfdf0;"></div>
<div style="left:158px;top:543px;width:1px;height:17px;background:#c0c0c0;"></div>
<div style="left:918px;top:543px;width:1px;height:17px;background:#c0c0c0;"></div>
<div style="left:1003px;top:543px;width:1px;height:17px;background:#c0c0c0;"></div>
<div style="left:1078px;top:543px;width:1px;height:17px;background:#c0c0c0;"></div>
<div style="left:1153px;top:543px;width:1px;height:17px;background:#c0c0c0;"></div>
<div style="left:1228px;top:543px;width:1px;height:17px;background:#c0c0c0;"></div>
<div style="left:1303px;top:543px;width:1px;height:17px;background:#c0c0c0;"></div>
<div style="left:1363px;top:543px;width:1px;height:17px;background:#c0c0c0;"></div>
<div style="left:1423px;top:543px;width:1px;height:17px;background:#c0c0c0;"></div>
<div style="left:1483px;top:543px;width:1px;height:17px;background:#c0c0c0;"></div>
<div style="left:1543px;top:543px;width:1px;height:17px;background:#c0c0c0;"></div>
<div style="left:1603px;top:543px;width:1px;height:17px;background:#c0c0c0;"></div>
<div style="left:4px;top:560px;width:1683px;height:1px;background:#c0c0c0;"></div>
<div class="t" style="left:190px;top:546px;color:#0000ff;letter-spacing:-0.4px;">ФОТ</div>
<div class="t" style="top:546px;color:#0000ff;right:685px;">678,60</div>
<div style="left:4px;top:561px;width:1683px;height:17px;background:#fdfdf0;"></div>
<div style="left:158px;top:561px;width:1px;height:17px;background:#c0c0c0;"></div>
<div style="left:918px;top:561px;width:1px;height:17px;background:#c0c0c0;"></div>
<div style="left:1003px;top:561px;width:1px;height:17px;background:#c0c0c0;"></div>
<div style="left:1078px;top:561px;width:1px;height:17px;background:#c0c0c0;"></div>
<div style="left:1153px;top:561px;width:1px;height:17px;background:#c0c0c0;"></div>
<div style="left:1228px;top:561px;width:1px;height:17px;background:#c0c0c0;"></div>
<div style="left:1303px;top:561px;width:1px;height:17px;background:#c0c0c0;"></div>
<div style="left:1363px;top:561px;width:1px;height:17px;background:#c0c0c0;"></div>
<div style="left:1423px;top:561px;width:1px;height:17px;background:#c0c0c0;"></div>
<div style="left:1483px;top:561px;width:1px;height:17px;background:#c0c0c0;"></div>
<div style="left:1543px;top:561px;width:1px;height:17px;background:#c0c0c0;"></div>
<div style="left:1603px;top:561px;width:1px;height:17px;background:#c0c0c0;"></div>
<div style="left:4px;top:578px;width:1683px;height:1px;background:#c0c0c0;"></div>
<div class="t" style="left:190px;top:564px;color:#0000ff;letter-spacing:0.05px;">Накладные расходы</div>
<div class="t" style="top:564px;color:#0000ff;right:685px;">781,75</div>
<div style="left:4px;top:579px;width:1683px;height:17px;background:#fdfdf0;"></div>
<div style="left:158px;top:579px;width:1px;height:17px;background:#c0c0c0;"></div>
<div style="left:918px;top:579px;width:1px;height:17px;background:#c0c0c0;"></div>
<div style="left:1003px;top:579px;width:1px;height:17px;background:#c0c0c0;"></div>
<div style="left:1078px;top:579px;width:1px;height:17px;background:#c0c0c0;"></div>
<div style="left:1153px;top:579px;width:1px;height:17px;background:#c0c0c0;"></div>
<div style="left:1228px;top:579px;width:1px;height:17px;background:#c0c0c0;"></div>
<div style="left:1303px;top:579px;width:1px;height:17px;background:#c0c0c0;"></div>
<div style="left:1363px;top:579px;width:1px;height:17px;background:#c0c0c0;"></div>
<div style="left:1423px;top:579px;width:1px;height:17px;background:#c0c0c0;"></div>
<div style="left:1483px;top:579px;width:1px;height:17px;background:#c0c0c0;"></div>
<div style="left:1543px;top:579px;width:1px;height:17px;background:#c0c0c0;"></div>
<div style="left:1603px;top:579px;width:1px;height:17px;background:#c0c0c0;"></div>
<div style="left:4px;top:596px;width:1683px;height:1px;background:#c0c0c0;"></div>
<div class="t" style="left:190px;top:582px;color:#0000ff;letter-spacing:-0.13px;">Сметная прибыль</div>
<div class="t" style="top:582px;color:#0000ff;right:685px;">563,24</div>
<div style="left:4px;top:597px;width:1683px;height:17px;background:#fdfdf0;"></div>
<div style="left:158px;top:597px;width:1px;height:17px;background:#c0c0c0;"></div>
<div style="left:918px;top:597px;width:1px;height:17px;background:#c0c0c0;"></div>
<div style="left:1003px;top:597px;width:1px;height:17px;background:#c0c0c0;"></div>
<div style="left:1078px;top:597px;width:1px;height:17px;background:#c0c0c0;"></div>
<div style="left:1153px;top:597px;width:1px;height:17px;background:#c0c0c0;"></div>
<div style="left:1228px;top:597px;width:1px;height:17px;background:#c0c0c0;"></div>
<div style="left:1303px;top:597px;width:1px;height:17px;background:#c0c0c0;"></div>
<div style="left:1363px;top:597px;width:1px;height:17px;background:#c0c0c0;"></div>
<div style="left:1423px;top:597px;width:1px;height:17px;background:#c0c0c0;"></div>
<div style="left:1483px;top:597px;width:1px;height:17px;background:#c0c0c0;"></div>
<div style="left:1543px;top:597px;width:1px;height:17px;background:#c0c0c0;"></div>
<div style="left:1603px;top:597px;width:1px;height:17px;background:#c0c0c0;"></div>
<div style="left:4px;top:614px;width:1683px;height:1px;background:#c0c0c0;"></div>
<div class="t" style="left:173px;top:600px;color:#000;letter-spacing:0px;">НДС 18%</div>
<div class="t" style="top:600px;color:#000;right:685px;">367,42</div>
<div style="left:4px;top:615px;width:1683px;height:17px;background:#fdfdf0;"></div>
<div style="left:158px;top:615px;width:1px;height:17px;background:#c0c0c0;"></div>
<div style="left:918px;top:615px;width:1px;height:17px;background:#c0c0c0;"></div>
<div style="left:1003px;top:615px;width:1px;height:17px;background:#c0c0c0;"></div>
<div style="left:1078px;top:615px;width:1px;height:17px;background:#c0c0c0;"></div>
<div style="left:1153px;top:615px;width:1px;height:17px;background:#c0c0c0;"></div>
<div style="left:1228px;top:615px;width:1px;height:17px;background:#c0c0c0;"></div>
<div style="left:1303px;top:615px;width:1px;height:17px;background:#c0c0c0;"></div>
<div style="left:1363px;top:615px;width:1px;height:17px;background:#c0c0c0;"></div>
<div style="left:1423px;top:615px;width:1px;height:17px;background:#c0c0c0;"></div>
<div style="left:1483px;top:615px;width:1px;height:17px;background:#c0c0c0;"></div>
<div style="left:1543px;top:615px;width:1px;height:17px;background:#c0c0c0;"></div>
<div style="left:1603px;top:615px;width:1px;height:17px;background:#c0c0c0;"></div>
<div style="left:4px;top:632px;width:1683px;height:1px;background:#c0c0c0;"></div>
<div class="t" style="left:173px;top:618px;color:#000;letter-spacing:0.14px;font-weight:bold;-webkit-text-stroke:0.25px;">ВСЕГО по смете</div>
<div class="t" style="top:618px;color:#000;font-weight:bold;-webkit-text-stroke:0.25px;right:685px;letter-spacing:0.75px;margin-right:-0.75px">2 408,64</div>
<div class="t" style="top:618px;color:#000;font-weight:bold;-webkit-text-stroke:0.25px;right:265px;letter-spacing:0.75px;margin-right:-0.75px">5,9</div>
<div style="left:4px;top:630px;width:1683px;height:3px;background:#efefe9;"></div>
<div style="left:5px;top:631px;width:13px;height:5px;border-radius:2px;background:#7f8d6d;border-top:1px solid #ffffff"></div>
<div style="left:1674px;top:631px;width:16px;height:5px;border-radius:2px;background:#7f8d6d;border-top:1px solid #ffffff"></div>
<div style="left:21px;top:630px;width:101px;height:6px;border-radius:3px;background:#90a47a;border:1px solid #ffffff;border-bottom:none"></div>
</body></html>
